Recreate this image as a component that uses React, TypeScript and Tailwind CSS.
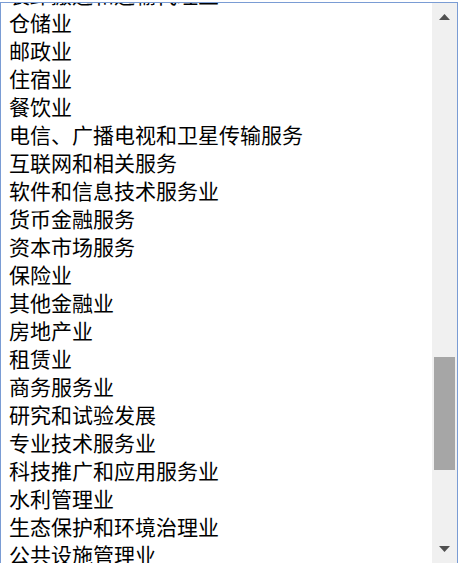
import React from 'react'

const items = [
  '装卸搬运和运输代理业',
  '仓储业',
  '邮政业',
  '住宿业',
  '餐饮业',
  '电信、广播电视和卫星传输服务',
  '互联网和相关服务',
  '软件和信息技术服务业',
  '货币金融服务',
  '资本市场服务',
  '保险业',
  '其他金融业',
  '房地产业',
  '租赁业',
  '商务服务业',
  '研究和试验发展',
  '专业技术服务业',
  '科技推广和应用服务业',
  '水利管理业',
  '生态保护和环境治理业',
  '公共设施管理业',
  '教育',
]

const App = () => {
  return (
    <div className="w-[458px] h-[563px] bg-white pt-[2px] overflow-hidden">
      <div className="flex h-[561px] border-t border-l border-r border-[#7a9cd4]">
        {/* List */}
        <div className="flex-1 overflow-hidden">
          <ul
            className="-mt-[23px] pl-[8px] text-[21px] leading-[28px] text-black"
            style={{ fontFamily: '"Noto Sans CJK SC", "Microsoft YaHei", sans-serif' }}
          >
            {items.map((item) => (
              <li key={item} className="h-[28px] whitespace-nowrap">
                {item}
              </li>
            ))}
          </ul>
        </div>

        {/* Scrollbar */}
        <div className="flex w-[25px] flex-col bg-[#f0f0f0]">
          <div className="flex h-[25px] items-center justify-center pt-[2px]">
            <svg width="11" height="6" viewBox="0 0 11 6">
              <polygon points="5.5,0 11,6 0,6" fill="#505050" />
            </svg>
          </div>
          <div className="flex-1 pt-[329px]">
            <div className="mx-[2px] h-[113px] w-[21px] bg-[#a6a6a6]" />
          </div>
          <div className="flex h-[25px] items-center justify-center pb-[4px]">
            <svg width="11" height="6" viewBox="0 0 11 6">
              <polygon points="0,0 11,0 5.5,6" fill="#505050" />
            </svg>
          </div>
        </div>
      </div>
    </div>
  )
}

export default App
